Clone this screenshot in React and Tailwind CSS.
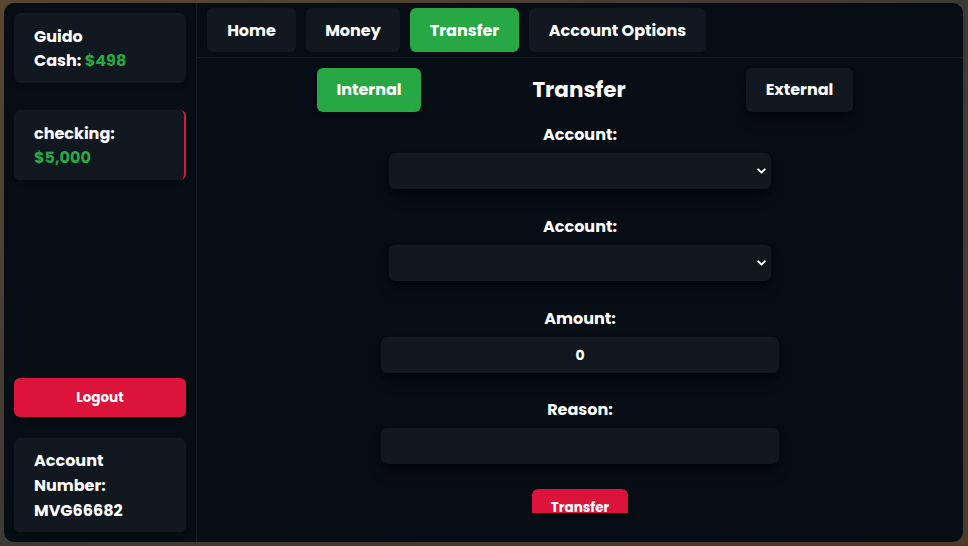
import { ChevronDown } from 'lucide-react';

const font = { fontFamily: 'Poppins, "Open Sans", "Noto Sans", sans-serif' };

const card = 'rounded-md bg-[#111820] shadow-md';
const field =
  'h-[36px] w-full rounded-md bg-[#111820] text-center text-sm font-bold text-white shadow-lg shadow-black/40 outline-none';

function NavButton({ label, active, width }) {
  return (
    <button
      type="button"
      className={`h-[44px] rounded-md pt-[2px] text-base font-bold text-white ${width} ${
        active ? 'bg-[#28a745]' : 'bg-[#111820]'
      }`}
    >
      {label}
    </button>
  );
}

function Label({ children }) {
  return <p className="text-center text-base font-bold leading-6 text-white">{children}</p>;
}

function SelectField() {
  return (
    <div className="relative w-[382px]">
      <select className={`${field} appearance-none`}>
        <option value=""></option>
      </select>
      <ChevronDown
        size={13}
        strokeWidth={3.5}
        className="pointer-events-none absolute right-[3px] top-1/2 -translate-y-1/2 text-white"
      />
    </div>
  );
}

export default function App() {
  return (
    <div
      className="h-[546px] w-[968px] overflow-hidden bg-gradient-to-br from-[#5a4630] via-[#3d3a34] to-[#4d3b26] pl-[4px] pt-[3px]"
      style={font}
    >
      <div className="flex h-[539px] w-[959px] overflow-hidden rounded-[10px] bg-[#070d15]">
        {/* sidebar */}
        <aside className="flex w-[193px] flex-col border-r border-[#141b24] px-[10px] pb-[10px] pt-[10px] text-base font-bold leading-6 text-white">
          <div className={`${card} px-5 pb-[10px] pt-[12px]`}>
            <p>Guido</p>
            <p>
              Cash: <span className="text-[#28a745]">$498</span>
            </p>
          </div>
          <div className={`${card} mt-[27px] border-r-2 border-[#dc143c] px-5 pb-[10px] pt-[12px]`}>
            <p>checking:</p>
            <p className="text-[#28a745]">$5,000</p>
          </div>
          <div className="flex-1" />
          <button
            type="button"
            className="h-[39px] rounded-md bg-[#dc143c] text-[13.5px] font-bold text-white shadow-md"
          >
            Logout
          </button>
          <div className={`${card} mt-[21px] px-5 pb-[9px] pt-[10px] leading-[25px]`}>
            <p>Account</p>
            <p>Number:</p>
            <p>MVG66682</p>
          </div>
        </aside>

        {/* main */}
        <main className="flex flex-1 flex-col">
          <nav className="flex gap-[10px] border-b border-[#141b24] pb-[5px] pl-[10px] pt-[5px]">
            <NavButton label="Home" width="w-[89px]" />
            <NavButton label="Money" width="w-[94px]" />
            <NavButton label="Transfer" width="w-[109px]" active />
            <NavButton label="Account Options" width="w-[177px]" />
          </nav>

          <div className="mb-[29px] flex flex-1 flex-col items-center overflow-hidden pt-[10px]">
            <div className="ml-[10px] flex w-[536px] items-center justify-between">
              <button
                type="button"
                className="h-[44px] w-[104px] rounded-md bg-[#28a745] text-base font-bold text-white shadow-md"
              >
                Internal
              </button>
              <h1 className="mr-[9px] text-[21.5px] font-bold text-white">Transfer</h1>
              <button
                type="button"
                className="h-[44px] w-[107px] rounded-md bg-[#111820] text-base font-bold text-white shadow-lg shadow-black/40"
              >
                External
              </button>
            </div>

            <div className="mt-[11px] flex flex-col items-center gap-[6px]">
              <Label>Account:</Label>
              <SelectField />
            </div>
            <div className="mt-[26px] flex flex-col items-center gap-[6px]">
              <Label>Account:</Label>
              <SelectField />
            </div>
            <div className="mt-[26px] flex w-[398px] flex-col items-center gap-[6px]">
              <Label>Amount:</Label>
              <input type="text" defaultValue="0" className={field} />
            </div>
            <div className="mt-[25px] flex w-[398px] flex-col items-center gap-[6px]">
              <Label>Reason:</Label>
              <input type="text" defaultValue="" className={field} />
            </div>
            <button
              type="button"
              className="mt-[25px] h-[38px] w-[96px] shrink-0 rounded-md bg-[#dc143c] text-[13.5px] font-bold text-white"
            >
              Transfer
            </button>
          </div>
        </main>
      </div>
    </div>
  );
}
